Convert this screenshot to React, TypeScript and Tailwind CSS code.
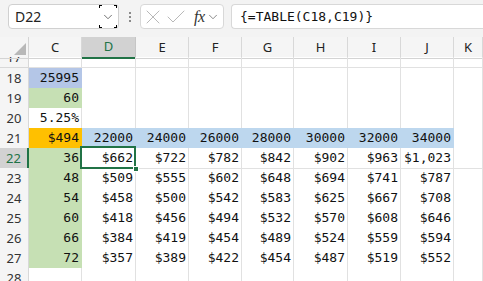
import { ChevronDown, X, Check } from 'lucide-react';

const cols = ['C', 'D', 'E', 'F', 'G', 'H', 'I', 'J', 'K'];

type Cell = { v?: string; bg?: string };

const mono = "font-['DejaVu_Sans_Mono',monospace]";
const sans = "font-['Noto_Sans',sans-serif]";

const table: number[][] = [
  [662, 722, 782, 842, 902, 963, 1023],
  [509, 555, 602, 648, 694, 741, 787],
  [458, 500, 542, 583, 625, 667, 708],
  [418, 456, 494, 532, 570, 608, 646],
  [384, 419, 454, 489, 524, 559, 594],
  [357, 389, 422, 454, 487, 519, 552],
];
const terms = [36, 48, 54, 60, 66, 72];

const money = (n: number) => '$' + n.toLocaleString('en-US');

function buildRows(): { n: number; cells: Cell[] }[] {
  const empty = (): Cell[] => cols.map(() => ({}));
  const rows: { n: number; cells: Cell[] }[] = [];
  rows.push({ n: 17, cells: empty() });
  const r18 = empty();
  r18[0] = { v: '25995', bg: 'bg-[#b4c6e7] border-[#b4c6e7]' };
  rows.push({ n: 18, cells: r18 });
  const r19 = empty();
  r19[0] = { v: '60', bg: 'bg-[#c6e0b4] border-[#c6e0b4]' };
  rows.push({ n: 19, cells: r19 });
  const r20 = empty();
  r20[0] = { v: '5.25%' };
  rows.push({ n: 20, cells: r20 });
  const r21 = empty();
  r21[0] = { v: '$494', bg: 'bg-[#ffc000] border-[#ffc000]' };
  [22000, 24000, 26000, 28000, 30000, 32000, 34000].forEach((v, i) => {
    r21[i + 1] = { v: String(v), bg: 'bg-[#bdd7ee] border-[#bdd7ee]' };
  });
  rows.push({ n: 21, cells: r21 });
  table.forEach((line, ri) => {
    const r = empty();
    r[0] = { v: String(terms[ri]), bg: 'bg-[#c6e0b4] border-[#c6e0b4]' };
    line.forEach((v, i) => (r[i + 1] = { v: money(v) }));
    rows.push({ n: 22 + ri, cells: r });
  });
  rows.push({ n: 28, cells: empty() });
  return rows;
}

const gridCols = 'grid grid-cols-[29px_53px_54px_53px_53px_52px_54px_53px_53px_1fr]';

export default function App() {
  const rows = buildRows();

  return (
    <div className="w-[483px] h-[281px] overflow-hidden bg-white">
      {/* formula bar */}
      <div className="h-[37px] bg-[#f3f3f3] flex items-start pt-[4px]">
        <div className="ml-[8px] w-[111px] h-[25px] bg-white border border-[#d0d0d0] rounded-[4px] flex items-center">
          <span className={`${sans} text-[14px] text-[#222] pl-[6px] flex-1`}>D22</span>
          <div className="relative w-[18px] h-[23px] mr-[1px] flex items-center justify-center">
            <span className="absolute left-0 top-0 w-[3px] h-[3px] border-l border-t border-black" />
            <span className="absolute right-0 top-0 w-[3px] h-[3px] border-r border-t border-black" />
            <span className="absolute left-0 bottom-0 w-[3px] h-[3px] border-l border-b border-black" />
            <span className="absolute right-0 bottom-0 w-[3px] h-[3px] border-r border-b border-black" />
            <ChevronDown size={14} strokeWidth={1.4} className="text-[#555]" />
          </div>
        </div>
        <div className="w-[21px] h-[25px] flex flex-col items-center justify-center gap-[2px]">
          <span className="w-[2px] h-[2px] bg-[#8a8a8a]" />
          <span className="w-[2px] h-[2px] bg-[#8a8a8a]" />
          <span className="w-[2px] h-[2px] bg-[#8a8a8a]" />
        </div>
        <div className="w-[84px] h-[25px] bg-white border border-[#d8d8d8] rounded-[4px] flex items-center">
          <X size={24} strokeWidth={0.9} className="text-[#b0b0b0] shrink-0" />
          <Check size={24} strokeWidth={0.9} className="text-[#b0b0b0] shrink-0 -ml-[1px]" />
          <span className="font-['Liberation_Serif',serif] italic text-[16px] text-[#333] ml-[6px] tracking-[-0.5px]">fx</span>
          <ChevronDown size={14} strokeWidth={1.3} className="text-[#666] ml-[1px] shrink-0" />
        </div>
        <div className="ml-[7px] flex-1 h-[25px] bg-white border border-[#d8d8d8] border-r-0 rounded-l-[4px] flex items-center pl-[8px]">
          <span className={`${mono} text-[13px] text-[#111]`}>{'{=TABLE(C18,C19)}'}</span>
        </div>
      </div>

      {/* column headers */}
      <div className={`${gridCols} h-[20px] bg-[#f5f5f5]`}>
        <div className="relative border-r border-b border-[#d4d4d4]">
          <svg width="12" height="12" className="absolute left-[14px] bottom-[3px]">
            <polygon points="12,0 12,12 0,12" fill="#b8b8b8" />
          </svg>
        </div>
        {cols.map((c) => (
          <div
            key={c}
            className={`${sans} text-[13px] flex items-center justify-center border-r ${
              c === 'D'
                ? 'bg-[#d2d2d2] border-[#c6c6c6] border-b-2 border-b-[#217346] text-[#217346]'
                : 'border-[#d8d8d8] border-b border-b-[#d4d4d4] text-[#222]'
            }`}
          >
            {c}
          </div>
        ))}
      </div>

      {/* rows */}
      {rows.map((row) => (
        <div
          key={row.n}
          className={`${gridCols} ${row.n === 17 ? 'h-[11px]' : 'h-[20px]'} ${row.n === 22 ? '' : 'overflow-hidden'}`}
        >
          <div
            className={`${sans} text-[13px] flex justify-center border-r border-b overflow-hidden ${
              row.n === 17 ? 'items-end' : 'items-center'
            } ${
              row.n === 22
                ? 'bg-[#d2d2d2] border-[#c6c6c6] border-r-2 border-r-[#217346] text-[#217346]'
                : 'bg-[#f5f5f5] border-[#d8d8d8] text-[#333]'
            }`}
          >
            <span className="leading-[20px] shrink-0">{row.n}</span>
          </div>
          {row.cells.map((cell, ci) => {
            const selected = row.n === 22 && ci === 1;
            return (
              <div
                key={ci}
                className={`relative ${mono} text-[13px] text-[#111] flex items-center justify-end pr-[2px] border-r border-b ${
                  cell.bg ?? 'border-[#e1e1e1]'
                } ${selected ? 'z-10' : ''}`}
              >
                {cell.v}
                {selected && (
                  <>
                    <span className="absolute -left-[2px] -top-[2px] right-[-1px] bottom-[-1px] border-2 border-[#217346]" />
                    <span className="absolute right-[-4px] bottom-[-4px] w-[6px] h-[6px] bg-[#217346] border border-white" />
                  </>
                )}
              </div>
            );
          })}
        </div>
      ))}
    </div>
  );
}
